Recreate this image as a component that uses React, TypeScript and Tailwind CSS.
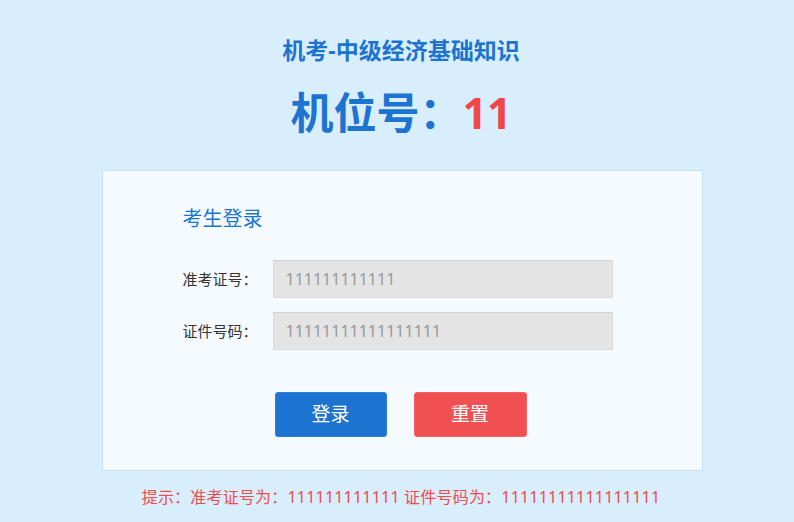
const font = { fontFamily: '"Noto Sans", "Noto Sans CJK SC", sans-serif' };

function Field({ label, value }: { label: string; value: string }) {
  return (
    <div className="flex items-center">
      <label className="w-[90px] text-[15px] text-[#333]">{label}</label>
      <input
        readOnly
        value={value}
        className="w-[340px] h-[38px] bg-[#e4e4e4] border border-[#dadada] border-t-[#d2d2d2] px-[12px] text-[16px] text-[#999] outline-none"
        style={font}
      />
    </div>
  );
}

export default function App() {
  return (
    <div className="min-h-screen w-full bg-[#d9eefd] flex flex-col items-center pl-[8px]" style={font}>
      <h1 className="pt-[35px] text-[23px] leading-[30px] font-bold text-[#1c74d0]">
        机考-中级经济基础知识
      </h1>
      <div className="mt-[23px] text-[43px] leading-[50px] font-bold text-[#1c74d0]">
        机位号：<span className="text-[#f04848]">11</span>
      </div>

      <div className="mt-[32px] ml-[2px] w-[601px] bg-[#f5faff] border border-[#c6e0f3] pl-[80px] pt-[36px] pb-[33px]">
        <h2 className="text-[20px] leading-[24px] text-[#1c74d0]">考生登录</h2>
        <div className="mt-[29px] flex flex-col gap-[14px]">
          <Field label="准考证号：" value="111111111111" />
          <Field label="证件号码：" value="11111111111111111" />
        </div>
        <div className="mt-[42px] ml-[92px] flex gap-[27px]">
          <button className="w-[112px] h-[45px] rounded-[3px] bg-[#1c74d0] border border-[#2a80d8] text-white text-[19px]">
            登录
          </button>
          <button className="w-[113px] h-[45px] rounded-[3px] bg-[#f05052] border border-[#f26264] text-white text-[19px]">
            重置
          </button>
        </div>
      </div>

      <p className="mt-[16px] text-[16px] leading-[20px] text-[#f04c4c] tracking-[0.2px]">
        提示：准考证号为：111111111111 证件号码为：11111111111111111
      </p>
    </div>
  );
}
